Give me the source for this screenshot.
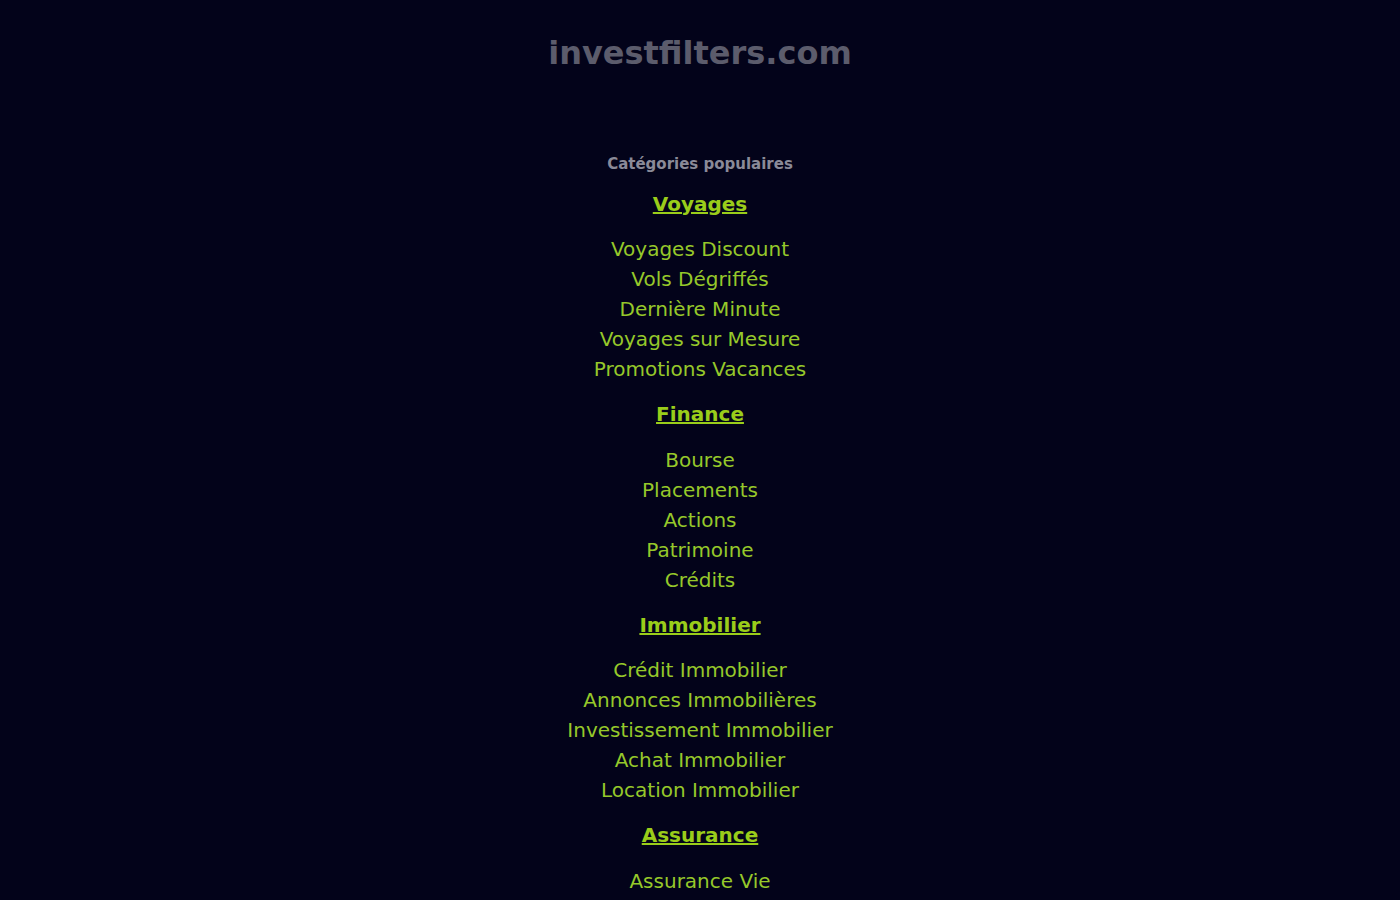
export default function App() {
  const sections = [
    { title: "Voyages", items: ["Voyages Discount", "Vols Dégriffés", "Dernière Minute", "Voyages sur Mesure", "Promotions Vacances"] },
    { title: "Finance", items: ["Bourse", "Placements", "Actions", "Patrimoine", "Crédits"] },
    { title: "Immobilier", items: ["Crédit Immobilier", "Annonces Immobilières", "Investissement Immobilier", "Achat Immobilier", "Location Immobilier"] },
    { title: "Assurance", items: ["Assurance Vie", "Assurance Auto", "Assurance Habitation", "Mutuelle Santé", "Prévoyance"] },
  ];
  return (
    <div className="min-h-screen bg-[#03031a] text-center" style={{ fontFamily: '"DejaVu Sans", sans-serif' }}>
      <div className="pt-[33px] text-[32px] leading-[40px] font-bold text-[#5c5c6c]">investfilters.com</div>
      <div className="mt-[81px] text-[15px] leading-[20px] font-bold text-[#8a8a98]">Catégories populaires</div>
      <div className="-mt-[0.5px]">
        {sections.map((s) => (
          <div key={s.title}>
            <div className="pt-[15px] pb-[15.5px]">
              <a href="#" className="text-[20px] leading-[30px] font-bold underline text-[#9acd1a]">{s.title}</a>
            </div>
            <ul>
              {s.items.map((it) => (
                <li key={it}>
                  <a href="#" className="text-[20px] leading-[30px] text-[#96c82a]">{it}</a>
                </li>
              ))}
            </ul>
          </div>
        ))}
      </div>
    </div>
  );
}
